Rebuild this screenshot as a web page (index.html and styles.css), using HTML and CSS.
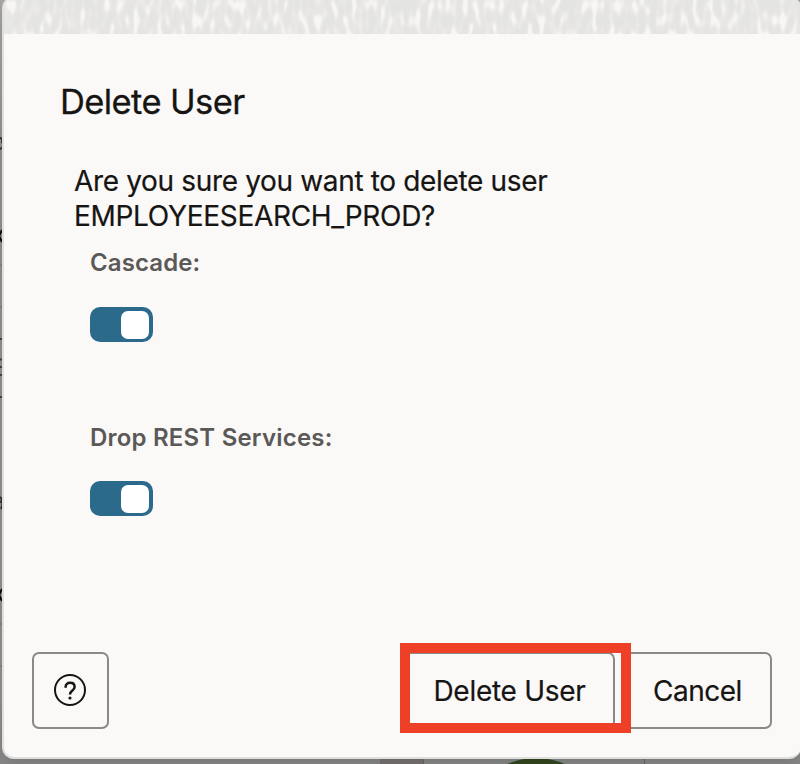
FILE: index.html
```
<!DOCTYPE html>
<html lang="en">
<head>
<meta charset="utf-8">
<title>Delete User</title>
<link rel="stylesheet" href="styles.css">
</head>
<body>
<div class="backdrop" aria-hidden="true">
  <svg width="800" height="764" viewBox="0 0 800 764">
    <path d="M0 138q3 0 2 4q3 5-2 7M0 497q3 2 1 5q3 0 0 7" fill="none" stroke="#333" stroke-width="2"/>
    <path d="M2 230l-3 6 3 6M2 589l-3 6 3 6" fill="none" stroke="#080808" stroke-width="2"/>
    <path d="M0 339h3M0 359.500h3M0 367h3M0 375h3M0 397h3" stroke="#444" stroke-width="2"/>
    <path d="M0 265h3M0 307h3M0 624h3M0 666h3" stroke="#777"/>
    <path d="M380 758h43v6h-43z" fill="#777371"/>
    <path d="M423.500 758v6M644.500 758v6" stroke="#666"/>
    <ellipse cx="536" cy="790" rx="49" ry="32" fill="#34471f"/>
  </svg>
</div>
<main class="dialog" role="dialog" aria-labelledby="title">
  <svg class="texture" width="797" height="36" aria-hidden="true">
    <filter id="grain" x="0" y="0" width="100%" height="100%" color-interpolation-filters="sRGB">
      <feTurbulence type="fractalNoise" baseFrequency="0.17 0.065" numOctaves="1" seed="8"/>
      <feColorMatrix values="3.4 0 0 0 -1.350  3.4 0 0 0 -1.350  3.4 0 0 0 -1.350  0 0 0 0 1"/>
      <feComponentTransfer>
        <feFuncR type="table" tableValues="0.898 0.915 0.970"/>
        <feFuncG type="table" tableValues="0.896 0.912 0.966"/>
        <feFuncB type="table" tableValues="0.892 0.908 0.961"/>
      </feComponentTransfer>
    </filter>
    <rect width="797" height="36" filter="url(#grain)"/>
  </svg>
  <h1 class="title" id="title">Delete User</h1>
  <p class="message"><span class="line1">Are you sure you want to delete user</span><br><span class="line2">EMPLOYEESEARCH_PROD?</span></p>
  <section class="option">
    <div class="label cascade">Cascade:</div>
    <div class="switch" role="switch" aria-checked="true"><span class="thumb"></span></div>
  </section>
  <section class="option">
    <div class="label rest">Drop REST Services:</div>
    <div class="switch" role="switch" aria-checked="true"><span class="thumb"></span></div>
  </section>
  <footer class="footer">
    <button class="btn help" aria-label="Help">
      <svg width="34" height="34" viewBox="0 0 34 34" fill="none" stroke="#161513">
        <circle cx="17" cy="17" r="15" stroke-width="2"/>
        <path d="M12.600 14.700V14c0-2.800 1.900-4.200 4.500-4.200s4.500 1.500 4.500 4.100c0 3.600-4.600 3.500-4.600 7.500" stroke-width="2.500"/>
        <circle cx="17" cy="25" r="1.600" fill="#161513" stroke="none"/>
      </svg>
    </button>
    <div class="primary">
      <button class="btn delete"><span>Delete User</span></button>
      <div class="highlight"></div>
    </div>
    <button class="btn cancel"><span>Cancel</span></button>
  </footer>
</main>
</body>
</html>
```
FILE: styles.css
```
* { box-sizing: border-box; }
body {
  margin: 0;
  width: 800px;
  height: 764px;
  overflow: hidden;
  background: #858585;
  color: #161513;
  font-family: Inter, "Liberation Sans", sans-serif;
}
.backdrop {
  position: absolute;
  inset: 0;
  background: linear-gradient(#a8a8a8 0, #929292 160px, #929292 700px, #888 764px);
}
.backdrop svg { display: block; }
.dialog {
  position: relative;
  display: flex;
  flex-direction: column;
  width: 799px;
  height: 763px;
  margin: -4px 0 0 2px;
  border: 2px solid #dfdfde;
  border-right: 0;
  border-radius: 12px;
  background: #fbf9f8;
  overflow: hidden;
  box-shadow: 0 4px 16px rgba(0, 0, 0, 0.15);
}
.texture { display: block; flex: none; }
.title {
  margin: 46px 0 0 56px;
  font-size: 34.500px;
  line-height: 44px;
  font-weight: 400;
  letter-spacing: -0.600px;
  white-space: nowrap;
  -webkit-text-stroke: 0.300px currentColor;
}
.message {
  margin: 40px 0 0 70px;
  font-size: 28px;
  line-height: 35px;
  white-space: nowrap;
  -webkit-text-stroke: 0.200px currentColor;
}
.line1 { letter-spacing: -0.340px; }
.line2 { letter-spacing: -0.300px; }
.option { margin-left: 86px; height: 175px; flex: none; padding-top: 14px; }
.label {
  height: 30px;
  color: #5b5957;
  font-size: 24px;
  line-height: 30px;
  font-weight: 600;
  white-space: nowrap;
}
.cascade { letter-spacing: 0.100px; }
.rest { height: 29px; letter-spacing: 0.200px; }
.switch {
  display: flex;
  justify-content: flex-end;
  width: 63px;
  height: 35px;
  margin-top: 29px;
  padding: 4px;
  border-radius: 10px;
  background: #2c6a8b;
}
.thumb { width: 28px; height: 28px; border-radius: 7px; background: #fff; }
.footer {
  display: flex;
  height: 77px;
  margin: auto 29px 28px 28px;
}
.btn {
  display: flex;
  align-items: center;
  justify-content: center;
  height: 77px;
  padding: 0;
  border: 2px solid #8b8987;
  border-radius: 7px;
  background: transparent;
  color: inherit;
  font: 400 28px/36px Inter, "Liberation Sans", sans-serif;
  white-space: nowrap;
  -webkit-text-stroke: 0.200px currentColor;
}
.help { width: 77px; }
.help svg { margin-top: -2px; margin-left: -1px; }
.primary { position: relative; margin-left: auto; }
.delete { width: 211px; letter-spacing: -0.280px; }
.cancel { width: 149px; margin-left: 8px; letter-spacing: -0.500px; }
.highlight {
  position: absolute;
  left: -4px;
  top: -9px;
  width: 231px;
  height: 90px;
  border: 10px solid #ed4026;
}
```
